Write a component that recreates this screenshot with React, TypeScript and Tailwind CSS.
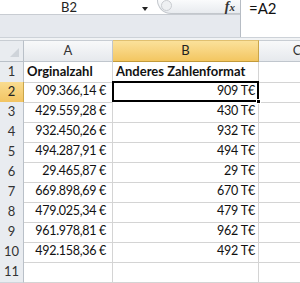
import React from 'react'

const rows: [string, string][] = [
  ['909.366,14 €', '909 T€'],
  ['429.559,28 €', '430 T€'],
  ['932.450,26 €', '932 T€'],
  ['494.287,91 €', '494 T€'],
  ['29.465,87 €', '29 T€'],
  ['669.898,69 €', '670 T€'],
  ['479.025,34 €', '479 T€'],
  ['961.978,81 €', '962 T€'],
  ['492.158,36 €', '492 T€'],
]

const grid = 'grid grid-cols-[24px_89px_146px_76px]'

function RowHead({ n, active }: { n: number; active?: boolean }) {
  return (
    <div
      className={
        'flex items-center justify-center border-r border-b text-[13px] ' +
        (active
          ? 'bg-gradient-to-b from-[#f9dc8f] to-[#f2c462] border-r-[#c9a54a] border-b-[#d8b860] text-[#222]'
          : 'bg-[#e9ecf0] border-r-[#b9c0c8] border-b-[#d0d5db] text-[#333]')
      }
    >
      {n}
    </div>
  )
}

export default function App() {
  return (
    <div className="w-[300px] h-[283px] overflow-hidden bg-white font-['Lato','Liberation_Sans',sans-serif] text-[#111]">
      {/* formula bar */}
      <div className="flex h-[37px]">
        <div className="w-[240px] flex flex-col">
          <div className="h-[14px] relative">
            <span className="absolute left-[61px] top-[1px] text-[13px] leading-[13px] text-[#222]">B2</span>
            <span className="absolute left-[142px] top-[7px] w-0 h-0 border-l-[3px] border-r-[3px] border-t-[4px] border-l-transparent border-r-transparent border-t-[#222]" />
            <div className="absolute left-[157px] top-0 w-[83px] h-[14px] rounded-bl-full border-l border-b border-[#c3c7cc] bg-gradient-to-b from-[#fafbfc] to-[#e8ebef]">
              <div className="absolute left-[3px] top-0 w-[11px] h-[11px] rounded-full border border-[#c9ccd0] bg-[#eef0f2]" />
              <span className="absolute right-[5px] top-[0px] font-['Liberation_Serif',serif] italic font-bold text-[14px] leading-[13px] text-[#333]">f<span className="text-[11px]">x</span></span>
            </div>
          </div>
          <div className="flex-1 bg-[#e6e9ee] border-t border-[#c8ccd2]" />
        </div>
        <div className="flex-1 border-l border-[#b6bcc4] pl-[8px] text-[15px] leading-[16px] text-[#111]">=A2</div>
      </div>
      <div className="h-[3px] bg-[#f1f3f5] border-t border-[#cdd2d8]" />

      {/* column headers */}
      <div className={grid + ' h-[22px]'}>
        <div className="relative bg-[#e9ecf0] border-r border-b border-[#b9c0c8] border-t border-t-[#c8cdd3]">
          <span className="absolute right-[4px] bottom-[4px] w-0 h-0 border-l-[9px] border-b-[9px] border-l-transparent border-b-[#cfd4da]" />
        </div>
        <div className="flex items-center justify-center text-[13px] text-[#333] bg-gradient-to-b from-[#f8f9fa] to-[#e6e9ed] border-r border-b border-[#c0c6cd] border-t border-t-[#c8cdd3]">A</div>
        <div className="flex items-center justify-center text-[13px] text-[#222] bg-gradient-to-b from-[#fbe19a] to-[#f3c660] border-r border-b border-r-[#c9a54a] border-b-[#c29a3a] border-t border-t-[#e0c070]">B</div>
        <div className="flex items-center justify-center text-[13px] text-[#333] bg-gradient-to-b from-[#f8f9fa] to-[#e6e9ed] border-b border-[#c0c6cd] border-t border-t-[#c8cdd3]">C</div>
      </div>

      {/* row 1 */}
      <div className={grid + ' h-[20px]'}>
        <RowHead n={1} />
        <div className="flex items-center pl-[3px] font-bold text-[13px] border-r border-b border-[#d4d4d4]">Orginalzahl</div>
        <div className="flex items-center pl-[3px] font-bold text-[13px] whitespace-nowrap border-r border-b border-[#d4d4d4]">Anderes Zahlenformat</div>
        <div className="border-b border-[#d4d4d4]" />
      </div>

      {rows.map(([a, b], i) => (
        <div key={i} className={grid + ' h-[20px]'}>
          <RowHead n={i + 2} active={i === 0} />
          <div className="flex items-center justify-end pr-[6px] text-[12.5px] tracking-[-0.3px] whitespace-nowrap border-r border-b border-[#d4d4d4]">{a}</div>
          {i === 0 ? (
            <div className="relative -mt-px -ml-px flex items-center justify-end pr-[2px] text-[12.5px] tracking-[-0.2px] border-2 border-black h-[21px]">
              {b}
              <span className="absolute -right-[4px] -bottom-[4px] w-[5px] h-[5px] bg-black border border-white" />
            </div>
          ) : (
            <div className="flex items-center justify-end pr-[3px] text-[12.5px] tracking-[-0.2px] border-r border-b border-[#d4d4d4]">{b}</div>
          )}
          <div className="border-b border-[#d4d4d4]" />
        </div>
      ))}

      <div className={grid + ' h-[20px]'}>
        <RowHead n={11} />
        <div className="border-r border-b border-[#d4d4d4]" />
        <div className="border-r border-b border-[#d4d4d4]" />
        <div className="border-b border-[#d4d4d4]" />
      </div>
    </div>
  )
}
